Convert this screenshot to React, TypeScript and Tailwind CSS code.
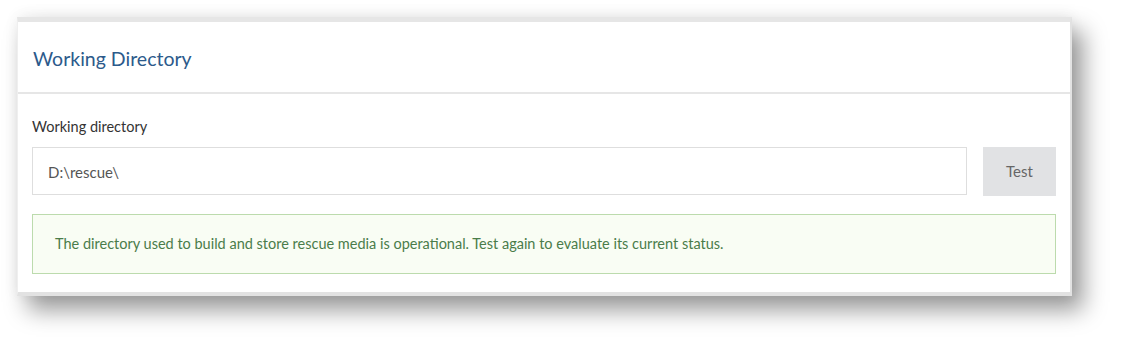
import React from 'react';

const App: React.FC = () => {
  return (
    <div className="w-[1121px] h-[348px] bg-white pt-[17px] pl-[17px]" style={{ fontFamily: 'Lato, "Open Sans", sans-serif' }}>
      <div className="w-[1055px] bg-white border-t-[5px] border-t-[#e6e6e6] border-b-[4px] border-b-[#e2e2e2] border-r-2 border-r-[#e2e2e2] border-l border-l-[#efefef] shadow-[11px_14px_22px_rgba(0,0,0,0.4),0_-2px_14px_rgba(0,0,0,0.06)]">
        {/* Header */}
        <div className="h-[72px] flex items-center pt-[3px] px-[15px] border-b-2 border-b-[#e6e6e6]">
          <h2 className="text-[19.5px] text-[#2c5a8b]">Working Directory</h2>
        </div>

        {/* Body */}
        <div className="px-[14px] pt-[23px] pb-[18px]">
          <label className="block text-[14.5px] leading-[20px] text-[#333] mb-[10px]">Working directory</label>
          <div className="flex gap-[16px]">
            <div className="flex-1 h-[48px] border border-[#dedede] flex items-center pt-[2px] px-[15px] text-[15px] text-[#555]">
              D:\rescue\
            </div>
            <button className="w-[73px] h-[49px] bg-[#e1e2e4] text-[15px] text-[#666]">Test</button>
          </div>
          <div className="mt-[18px] h-[60px] border border-[#bcdbad] bg-[#f9fdf4] flex items-center px-[22px] text-[14.5px] text-[#4a7c4a]">
            The directory used to build and store rescue media is operational. Test again to evaluate its current status.
          </div>
        </div>
      </div>
    </div>
  );
};

export default App;
